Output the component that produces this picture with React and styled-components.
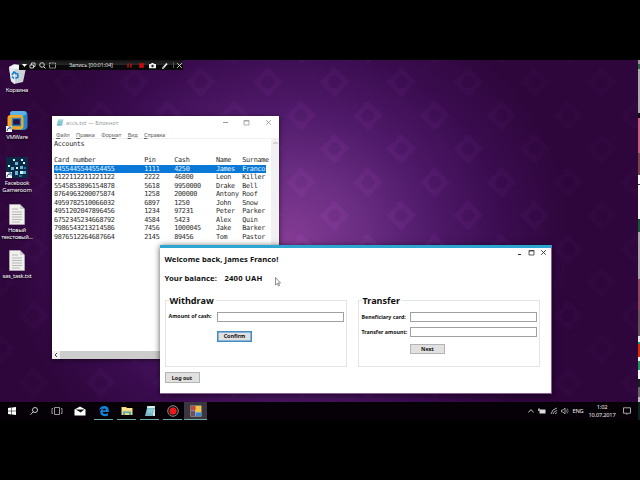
import React from 'react';
import styled, { createGlobalStyle } from 'styled-components';

const Global = createGlobalStyle`
  * { box-sizing: border-box; }
  body { margin: 0; background: #000; overflow: hidden; font-family: "Noto Sans", "Open Sans", sans-serif; }
`;

const Screen = styled.div`
  width: 640px; height: 480px; background: #000; padding-top: 60px; overflow: hidden;
  display: grid; grid-template-columns: 638px 2px; grid-template-rows: 342px 18px;
`;
const Desktop = styled.main`
  position: relative; overflow: hidden;
  background: radial-gradient(ellipse 285px 255px at 288px 180px, #843b94 0%, #6b2e83 25%, #4e1968 52%, #3a0c4f 76%, #2e063b 100%);
`;
const Wallpaper = styled.svg`position: absolute; inset: 0; width: 638px; height: 342px;`;
const Edge = styled.div`
  grid-row: span 2;
  background: linear-gradient(#999 0 4px, #2a6040 4px 9px, #aaa 9px 53px, #111 53px 58px, #c46480 58px 93px,
    #79494f 93px 115px, #fff 115px 124px, #444 124px 125px, #fff 125px 159px, #1b5838 159px 172px,
    #aaa 172px 219px, #8b4860 219px 250px, #65545a 250px 276px, #eee 276px 282px, #16955a 282px 284px,
    #dc2d0c 284px 297px, #fff 297px 301px, #26945b 301px 310px, #fff 310px 319px, #10251a 319px 327px,
    #666 327px 337px, #bbb 337px 342px, #10251a 342px 358px);
`;
const Shortcuts = styled.nav`
  position: absolute; left: 0; top: 4px; width: 34px; display: grid;
  grid-template-columns: 34px; grid-template-rows: repeat(5, 46.5px); justify-items: center;
`;
const Shortcut = styled.div`
  width: 34px; display: flex; flex-direction: column; align-items: center;
  color: #fff; font-size: 5.8px; line-height: 7px; letter-spacing: -0.2px; text-align: center; white-space: pre;
  text-shadow: 0 1px 1px #000;
  svg { width: 22px; height: 21px; margin-bottom: 2px; display: block; flex: none; }
`;

const Recorder = styled.div`
  position: absolute; left: 19px; top: 0; width: 164px; height: 10px; padding: 0 2px;
  background: linear-gradient(#111, #292929 50%, #080808 55%); color: #ddd;
  display: grid; grid-template-columns: 8px 10px 10px 11px 66px 12px 11px 12px 12px 3px 7px;
  align-items: center; font-size: 5.7px; letter-spacing: -0.2px; line-height: 10px;
  svg { width: 7px; height: 7px; display: block; overflow: visible; }
`;
const RecorderLabel = styled.span`padding-left: 9px; white-space: nowrap;`;
const Divider = styled.i`width: 1px; height: 6px; background: #555;`;

const Notepad = styled.section`
  position: absolute; left: 52px; top: 55.5px; width: 227px; height: 243px; background: #fff;
  box-shadow: 0 1px 5px #0009; display: flex; flex-direction: column;
`;
const NoteTitle = styled.header`
  height: 14px; padding: 0 0 0 4px; display: flex; align-items: center; color: #999;
  font-size: 5.8px; line-height: 14px;
  svg { width: 8px; height: 9px; margin-right: 2px; }
`;
const Caption = styled.span`flex: 1; white-space: nowrap;`;
const NoteControls = styled.div`
  display: grid; grid-template-columns: repeat(3, 21.5px); justify-items: center;
  svg { width: 7px; height: 7px; margin: 0; }
`;
const Menu = styled.div`
  height: 9px; padding-left: 4px; display: flex; gap: 6.5px; color: #666; font-size: 5.5px; line-height: 10px;
  letter-spacing: -0.15px; border-bottom: 1px solid #f1f1f1;
  u { text-decoration-thickness: 0.5px; text-underline-offset: 1px; }
`;
const NoteBody = styled.div`flex: 1; display: flex; min-height: 0;`;
const Sheet = styled.div`
  flex: 1; padding: 1px 0 0 2px; color: #2b2b2b;
  font: 6.8px/8.47px "DejaVu Sans Mono", "Liberation Mono", monospace; letter-spacing: -0.31px;
`;
const Line = styled.div`
  display: grid; grid-template-columns: 90.3px 30px 41.7px 26.3px 23.2px; width: 211.5px; height: 8.47px; white-space: pre;
  ${p => p.$selected && 'background: #0a78d7; color: #e2f2ff;'}
`;
const VScroll = styled.div`
  width: 8px; background: #f1f1f1; display: flex; justify-content: center; padding-top: 2px;
  svg { width: 5px; height: 4px; }
`;
const HScroll = styled.div`
  height: 8px; background: #cdcdcd; display: flex;
  svg { width: 8px; height: 8px; background: #f0f0f0; }
`;

const Bank = styled.section`
  position: absolute; left: 160px; top: 185px; width: 392px; height: 149px; background: #fff;
  border-top: 3px solid #2ca5d0; border-right: 1px solid #8d5c9b; border-bottom: 1px solid #8d5c9b;
  box-shadow: 0 1px 6px #000a; color: #111; font-weight: 700; padding-left: 4.5px;
  display: grid; grid-template-rows: 20px 20px 7.2px 77.3px 20px;
`;
const BankHead = styled.header`display: flex; justify-content: space-between; padding-right: 4px;`;
const Heading = styled.div`
  font-size: 7.7px; letter-spacing: 0.05px; line-height: 10px; padding-top: ${p => p.$top}px; white-space: pre;
`;
const Balance = styled.span`margin-left: 7.5px; letter-spacing: 0.2px;`;
const BankControls = styled.div`
  display: flex; gap: 5px; padding-top: 1px;
  svg { width: 7px; height: 7px; }
`;
const Groups = styled.div`display: grid; grid-template-columns: 182px 182px; column-gap: 11px;`;
const Group = styled.fieldset`
  margin: 0; padding: 0; border: 1px solid #e4e4e4; height: 72px; min-width: 0;
`;
const Legend = styled.legend`
  margin-left: 3px; padding: 0 2px 0 1px; font-size: 9.1px; line-height: 11px; height: 11px;
`;
const Form = styled.div`
  display: grid; grid-template-columns: 51.5px 127px; align-items: center; row-gap: ${p => p.$gap}px;
  padding-top: ${p => p.$top}px;
`;
const Label = styled.label`
  padding-left: 3px; font-size: 5.35px; line-height: 8px; letter-spacing: -0.02px; white-space: nowrap;
  margin-top: ${p => p.$lift || 0}px;
`;
const Field = styled.input`
  width: 127px; height: 10px; border: 1px solid #a0a0a0; background: #fff; padding: 0 2px; font-size: 6px; outline: 0;
`;
const Button = styled.button`
  width: 35px; height: 10.5px; padding: 0; background: #e1e1e1; border: 1px solid ${p => (p.$focus ? '#3d8bc8' : '#b4b4b4')};
  ${p => p.$focus && 'box-shadow: inset 0 0 0 0.5px #3d8bc8;'}
  font: 700 5.4px/8px "Noto Sans", sans-serif; color: #111; grid-column: ${p => p.$column || 'auto'};
  margin-top: ${p => p.$drop || 0}px;
`;
const Footer = styled.div`display: flex; align-items: flex-start;`;
const Pointer = styled.svg`position: absolute; left: 275px; top: 217px; width: 6px; height: 10px;`;

const Taskbar = styled.footer`
  background: #050107; display: flex; justify-content: space-between; color: #eee;
`;
const Apps = styled.div`display: grid; grid-template-columns: 23px 22.5px 22.5px 24px repeat(5, 23px);`;
const AppButton = styled.div`
  display: flex; align-items: center; justify-content: center; background: ${p => (p.$active ? '#3a363e' : 'transparent')};
  box-shadow: ${p => (p.$open ? 'inset 0 -1px #70aaa8' : 'none')}; margin: 0 ${p => (p.$active ? 0 : 2)}px;
  svg { width: 12px; height: 12px; flex: none; }
`;
const Tray = styled.div`
  display: grid; grid-template-columns: 11px 11.5px 11px 11px 16px 32px 18px; align-items: center; justify-items: center;
  padding-right: 2px; font-size: 5.7px; letter-spacing: -0.22px;
  svg { width: 8px; height: 8px; }
`;
const Clock = styled.time`line-height: 8px; text-align: center; margin-top: -1px;`;

const rows = [
  ['Accounts'], [],
  ['Card number', 'Pin', 'Cash', 'Name', 'Surname'],
  ['4455445544554455', '1111', '4250', 'James', 'Franco'],
  ['1122112211221122', '2222', '46800', 'Leon', 'Killer'],
  ['5545853896154878', '5618', '9950000', 'Drake', 'Bell'],
  ['8764963200075874', '1258', '200000', 'Antony', 'Roof'],
  ['4959782510066032', '6897', '1250', 'John', 'Snow'],
  ['4951202047896456', '1234', '97231', 'Peter', 'Parker'],
  ['6752345234668792', '4584', '5423', 'Alex', 'Quin'],
  ['7986543213214586', '7456', '1000045', 'Jake', 'Barker'],
  ['9876512264687664', '2145', '89456', 'Tom', 'Pastor'],
];

const Minimize = ({ c, low }) => <svg viewBox="0 0 7 7"><path d={low ? 'M2 5.5H5' : 'M1 3.5H6'} stroke={c} /></svg>;
const Maximize = ({ c }) => <svg viewBox="0 0 7 7"><path d="M1 1.5H6V6H1Z M1 2H6" fill="none" stroke={c} strokeWidth=".8" /></svg>;
const Close = ({ c }) => <svg viewBox="0 0 7 7"><path d="M1.2 1.2 5.8 5.8M5.8 1.2 1.2 5.8" stroke={c} strokeWidth=".9" /></svg>;

const Bin = () => (
  <svg viewBox="0 0 22 21">
    <path d="M3 3 8 0 15 1 20 4 17 18 8 20 5 17Z" fill="#cdd1d8" />
    <path d="M3 3 9 5 20 4 15 1 8 1Z" fill="#f5f6f8" /><path d="M3 3 9 5 9 20 5 17Z" fill="#e6e9ed" />
    <path d="M6 11 8 8 10.5 10M11.5 9 12 13 9.5 14.5M8 14.5 6 12.5" fill="none" stroke="#1683cf" strokeWidth="1.7" />
  </svg>
);
const ShortcutArrow = () => (
  <g><rect x="0" y="15" width="6" height="6" fill="#f5f5f5" /><path d="M1 20Q1 17 4 17M2.5 16H5V18.5" fill="none" stroke="#245e9d" /></g>
);
const VMWare = () => (
  <svg viewBox="0 0 22 21">
    <path d="M4 3Q4 0 7 0H18Q21.5 0 21.5 4V15Q21.5 18.5 18 19H9Z" fill="#2487cb" />
    <path d="M4 3Q4 0 7 0H17Q20 0 20.5 3L17 5H6Z" fill="#5db3e8" />
    <path d="M4.5 4H14Q17.5 4 17.5 8V15Q17.5 18.5 14 18.5H6Q1.5 18.5 1.5 15V7Q1.5 4 4.5 4Z" fill="#f2a928" />
    <path d="M6.5 7.5H14.5V14.5H6.5Z" fill="#281246" stroke="#2980c4" strokeWidth="1.4" />
    <ShortcutArrow />
  </svg>
);
const Gameroom = () => (
  <svg viewBox="0 0 22 21">
    <path d="M0 0H22V21H0Z" fill="#0c2946" />
    <path d="M9 5h3v3H9zM14 9h3v3h-3zM5 10h3v3H5zM9 14h3v4H9zM17 14h3v3h-3z" fill="#62b5d4" />
    <path d="M7 2h2v2H7zM15 2h2v2h-2zM2 8h2v2H2zM17 5h2v2h-2zM14 14h3v3h-3zM10 10h2v2h-2z" fill="#d5f6ff" />
    <path d="M18 10h2v2h-2zM13 18h3v2h-3z" fill="#28719a" />
    <ShortcutArrow />
  </svg>
);
const Doc = () => (
  <svg viewBox="0 0 22 21">
    <path d="M3.5.5H14L18.5 5V20.5H3.5Z" fill="#f0f0ec" stroke="#c6c5c3" strokeWidth=".5" />
    <path d="M14 .5V5H18.5" fill="#ccc" />
    <path d="M6 5H12M6 8H16M6 10.5H16M6 13H16M6 15.5H16M6 18H14" stroke="#aeb1b3" strokeWidth=".9" />
  </svg>
);
const NoteIcon = () => (
  <svg viewBox="0 0 12 12">
    <path d="M3.5 1H11L9.5 9 8 11H1Z" fill="#75bac4" /><path d="M3.5 1H11L10.7 3H2.9Z" fill="#d4eff2" />
    <path d="M3.5 5H9M3 7H8" stroke="#bfe8ec" strokeWidth=".7" /><path d="M8.5 11 9.5 6 11 2V11Z" fill="#d5e5e6" />
  </svg>
);

const diamonds = [];
for (let r = -1; r < 11; r++) {
  for (let c = -1; c < 11; c++) {
    diamonds.push([c * 66.8 + (r % 2 ? 34 : 0.5), 22 + r * 33.4]);
  }
}

const shortcuts = [
  [Bin, 'Корзина'], [VMWare, 'VMWare'], [Gameroom, 'Facebook\nGameroom'],
  [Doc, 'Новый\nтекстовый...'], [Doc, 'sas_task.txt'],
];

export default function App() {
  return (
    <Screen>
      <Global />
      <Desktop>
        <Wallpaper>
          <defs>
            <radialGradient id="glow" gradientUnits="userSpaceOnUse" cx="300" cy="200" r="300">
              <stop offset="0" stopColor="#a850bc" stopOpacity=".24" />
              <stop offset=".5" stopColor="#8a32a4" stopOpacity=".14" />
              <stop offset="1" stopColor="#5d2275" stopOpacity=".06" />
            </radialGradient>
          </defs>
          <g fill="url(#glow)" fillRule="evenodd">
            {diamonds.map(([x, y], i) => (
              <path key={i} d={`M${x - 15} ${y}L${x - 4} ${y - 10}L${x - 5} ${y - 12}L${x} ${y - 15}L${x + 15} ${y}L${x + 5} ${y + 9}L${x + 5} ${y + 11}L${x} ${y + 15}ZM${x - 7} ${y}L${x - 4} ${y + 6}L${x + 3} ${y + 6}L${x + 7} ${y}L${x + 3} ${y - 6}L${x - 3} ${y - 6}Z`} />
            ))}
          </g>
        </Wallpaper>

        <Shortcuts>
          {shortcuts.map(([Icon, name]) => <Shortcut key={name}><Icon />{name}</Shortcut>)}
        </Shortcuts>

        <Recorder>
          <svg viewBox="0 0 7 7"><path d="M1 2H6L3.5 5Z" fill="#fff" /></svg>
          <svg viewBox="0 0 7 7"><path d="M1 3H4.5V6H1ZM2.5 3V1H6V4.5H4.5" fill="none" stroke="#ddd" strokeWidth=".9" /></svg>
          <svg viewBox="0 0 7 7"><circle cx="3" cy="3" r="2.3" fill="none" stroke="#ddd" strokeWidth=".9" /><path d="M4.7 4.7 6.5 6.5" stroke="#ddd" /></svg>
          <svg viewBox="0 0 7 7"><path d="M.5 1H6.5V6H.5Z" fill="none" stroke="#ccc" strokeWidth=".8" strokeDasharray="2 .6" /></svg>
          <RecorderLabel>Запись [00:01:04]</RecorderLabel>
          <svg viewBox="0 0 7 7"><path d="M2 1.5V5.5M5 1.5V5.5" stroke="#c40c12" strokeWidth="1.5" /></svg>
          <svg viewBox="0 0 7 7"><path d="M1.2 1.2H5.8V5.8H1.2Z" fill="#cb0a10" /></svg>
          <svg viewBox="0 0 7 7"><path d="M0 2H2L2.5 1H4.5L5 2H7V6.3H0Z" fill="#eee" /><circle cx="3.5" cy="4" r="1.2" fill="#222" /></svg>
          <svg viewBox="0 0 7 7"><path d="M2.5 5.5 6 1.5" stroke="#eee" strokeWidth="1.8" /><path d="M1 7 1.6 4.8 3.2 6.4Z" fill="#eee" /></svg>
          <Divider />
          <Close c="#ddd" />
        </Recorder>

        <Notepad>
          <NoteTitle>
            <NoteIcon /><Caption>accs.txt — Блокнот</Caption>
            <NoteControls><Minimize c="#999" /><Maximize c="#999" /><Close c="#999" /></NoteControls>
          </NoteTitle>
          <Menu>
            <span><u>Ф</u>айл</span><span><u>П</u>равка</span><span>Фор<u>м</u>ат</span><span><u>В</u>ид</span><span><u>С</u>правка</span>
          </Menu>
          <NoteBody>
            <Sheet>
              {rows.map((row, i) => (
                <Line key={i} $selected={i === 3}>{row.map(cell => <span key={cell}>{cell}</span>)}</Line>
              ))}
            </Sheet>
            <VScroll><svg viewBox="0 0 5 4"><path d="M.5 3 2.5 1 4.5 3" fill="none" stroke="#aaa" /></svg></VScroll>
          </NoteBody>
          <HScroll><svg viewBox="0 0 8 8"><path d="M5 2 3 4 5 6" fill="none" stroke="#444" /></svg></HScroll>
        </Notepad>

        <Bank>
          <BankHead>
            <Heading $top={6}>Welcome back, James Franco!</Heading>
            <BankControls><Minimize c="#333" low /><Maximize c="#333" /><Close c="#333" /></BankControls>
          </BankHead>
          <Heading $top={5}>Your balance:<Balance>2400 UAH</Balance></Heading>
          <span />
          <Groups>
            <Group>
              <Legend>Withdraw</Legend>
              <Form $top={6} $gap={9}>
                <Label $lift={-3}>Amount of cash:</Label><Field />
                <Button $focus $column={2}>Confirm</Button>
              </Form>
            </Group>
            <Group>
              <Legend>Transfer</Legend>
              <Form $top={5.5} $gap={5}>
                <Label>Beneficiary card:</Label><Field />
                <Label>Transfer amount:</Label><Field />
                <Button $column={2} $drop={2}>Next</Button>
              </Form>
            </Group>
          </Groups>
          <Footer><Button>Log out</Button></Footer>
        </Bank>
        <Pointer viewBox="0 0 6 10"><path d="M.5.5V8L2.3 6.4 3.5 9 4.5 8.5 3.4 6H5.5Z" fill="#fff" stroke="#444" strokeWidth=".6" /></Pointer>
      </Desktop>
      <Edge />

      <Taskbar>
        <Apps>
          <AppButton><svg viewBox="0 0 12 12"><path d="M2 3 5.5 2.5V5.7H2ZM6 2.4 10 2V5.7H6ZM2 6.2H5.5V9.5L2 9ZM6 6.2H10V10L6 9.6Z" fill="#fff" /></svg></AppButton>
          <AppButton><svg viewBox="0 0 12 12"><circle cx="7" cy="5" r="2.5" fill="none" stroke="#ddd" strokeWidth=".9" /><path d="M5.2 6.8 2.5 9.7" stroke="#ddd" strokeWidth=".9" /></svg></AppButton>
          <AppButton><svg viewBox="0 0 12 12"><path d="M3.5 2.5H8.5V9.5H3.5ZM2 3.5H1V8.5H2M10 3.5H11V8.5H10" fill="none" stroke="#bbb" strokeWidth=".8" /></svg></AppButton>
          <AppButton><svg viewBox="0 0 12 12"><path d="M.5 4.5 6 1.5 11.5 4.5V10.5H.5Z" fill="#fff" /><path d="M1.5 4.5H10.5L6.5 7.4 5.2 6.5Z" fill="#111" /></svg></AppButton>
          <AppButton $open><svg viewBox="0 0 12 12"><path d="M1.2 5.2Q2.2 1 6.3 1 10.8 1.2 10.8 5.6V7H4.4Q4.8 9 7.1 9 8.7 9 10 8.2V10.4Q8.7 11.2 6.8 11.2 2.2 11 2.2 7 2.3 4.6 4.8 3.6 2.6 3.6 1.2 5.2ZM4.5 5.2H7.9Q7.8 3.5 6.3 3.5 4.8 3.6 4.5 5.2Z" fill="#1681d8" fillRule="evenodd" /></svg></AppButton>
          <AppButton $open><svg viewBox="0 0 12 12"><path d="M.5 2H5L6 3H11.5V10H.5Z" fill="#f5d778" /><path d="M2 10V6.5H10V10H8V8H4V10Z" fill="#4faac5" /><path d="M1 4H11" stroke="#fff0b0" /></svg></AppButton>
          <AppButton $open><NoteIcon /></AppButton>
          <AppButton $open><svg viewBox="0 0 12 12"><circle cx="6" cy="6" r="5.3" fill="#171717" stroke="#aaa" strokeWidth=".8" /><circle cx="6" cy="6" r="3.5" fill="#f01919" /></svg></AppButton>
          <AppButton $open $active><svg viewBox="0 0 12 12"><path d="M.5.5H11.5V11.5H.5Z" fill="#bbb" /><path d="M1 1H5.5V5H1Z" fill="#c44937" /><path d="M6 1H11V7H6Z" fill="#f5c43d" /><path d="M1 5.5H5V11H1Z" fill="#744e59" /><path d="M5.5 7.5H11V11H5.5Z" fill="#3987d3" /></svg></AppButton>
        </Apps>
        <Tray>
          <svg viewBox="0 0 8 8"><path d="M1.3 5.3 4 2.7 6.7 5.3" fill="none" stroke="#ccc" /></svg>
          <svg viewBox="0 0 8 8"><path d="M1.5 2.5H7.5V6.5H1.5Z" fill="#ddd" /><path d="M0 1.5H2V4H0Z" fill="#aaa" /></svg>
          <svg viewBox="0 0 8 8"><path d="M1 7Q2 2 7 1M3 7Q4 4 7 3.5M5 7 7 5.5" fill="none" stroke="#aaa" strokeWidth="1" /></svg>
          <svg viewBox="0 0 8 8"><path d="M.5 3H2L4 1V7L2 5H.5Z" fill="none" stroke="#ccc" strokeWidth=".7" /><path d="M5 2.5Q6 4 5 5.5M6.3 1.5Q8 4 6.3 6.5" fill="none" stroke="#999" strokeWidth=".7" /></svg>
          <span>ENG</span>
          <Clock>1:02<br />10.07.2017</Clock>
          <svg viewBox="0 0 8 8"><path d="M.5.8H7.5V6.2H5.2L4 7.5V6.2H.5Z" fill="none" stroke="#ccc" strokeWidth=".8" /></svg>
        </Tray>
      </Taskbar>
    </Screen>
  );
}
